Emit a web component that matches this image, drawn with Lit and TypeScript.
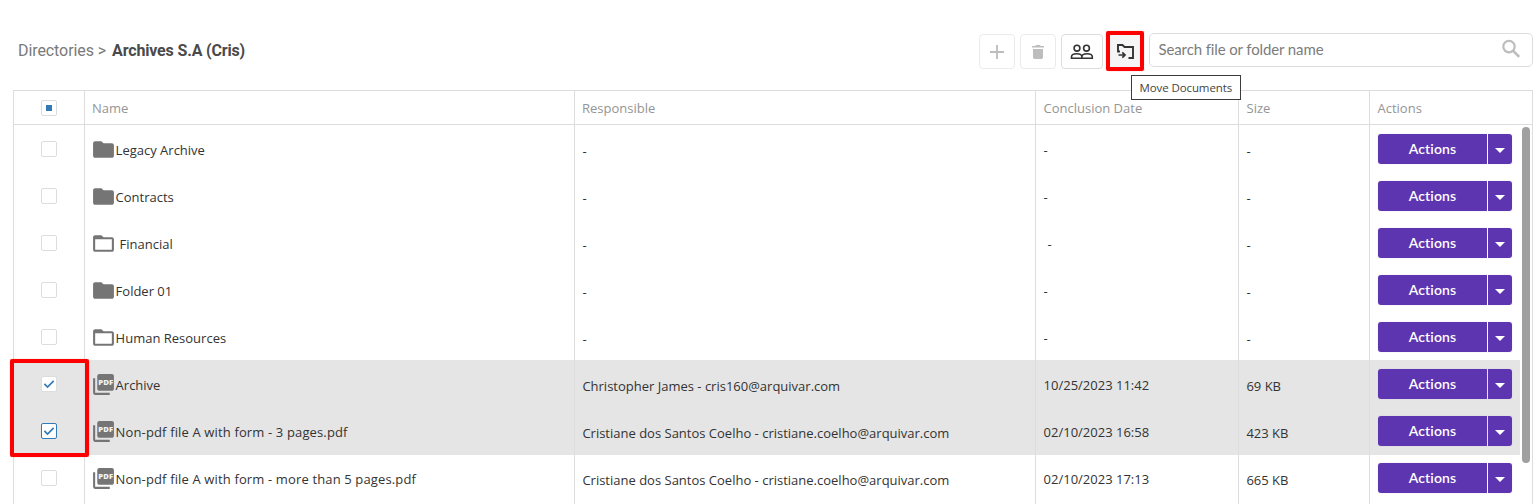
import { LitElement, html, css, svg, nothing } from "lit";
import { customElement, property } from "lit/decorators.js";
import { classMap } from "lit/directives/class-map.js";

type Kind = "folder" | "folder-open" | "pdf";

interface Entry {
  kind: Kind;
  name: string;
  responsible?: string;
  date?: string;
  size?: string;
  checked?: boolean;
  focused?: boolean;
  indent?: boolean;
}

const ENTRIES: Entry[] = [
  { kind: "folder", name: "Legacy Archive" },
  { kind: "folder", name: "Contracts" },
  { kind: "folder-open", name: "Financial", indent: true },
  { kind: "folder", name: "Folder 01" },
  { kind: "folder-open", name: "Human Resources" },
  { kind: "pdf", name: "Archive", responsible: "Christopher James - cris160@arquivar.com", date: "10/25/2023 11:42", size: "69 KB", checked: true },
  { kind: "pdf", name: "Non-pdf file A with form - 3 pages.pdf", responsible: "Cristiane dos Santos Coelho - cristiane.coelho@arquivar.com", date: "02/10/2023 16:58", size: "423 KB", checked: true, focused: true },
  { kind: "pdf", name: "Non-pdf file A with form - more than 5 pages.pdf", responsible: "Cristiane dos Santos Coelho - cristiane.coelho@arquivar.com", date: "02/10/2023 17:13", size: "665 KB" },
];

@customElement("file-icon")
class FileIcon extends LitElement {
  @property() kind: Kind = "folder";

  static styles = css`
    :host { display: block; flex: none; width: 25px; height: 25px; }
    svg { display: block; fill: #757575; }
    .label { font: 800 7.4px "Open Sans", sans-serif; fill: #f2f2f2; }
  `;

  render() {
    const shapes = {
      folder: svg`<path d="M10 4H4c-1.100 0-2 .9-2 2v12c0 1.100.9 2 2 2h16c1.100 0 2-.9 2-2V8c0-1.100-.9-2-2-2h-8l-2-2z"/>`,
      "folder-open": svg`<path d="M20 6h-8l-2-2H4c-1.100 0-2 .9-2 2v12c0 1.100.9 2 2 2h16c1.100 0 2-.9 2-2V8c0-1.100-.9-2-2-2zm0 12H4V8h16v10z"/>`,
      pdf: svg`<path d="M20 2H8c-1.100 0-2 .9-2 2v12c0 1.100.9 2 2 2h12c1.100 0 2-.9 2-2V4c0-1.100-.9-2-2-2z"/><path d="M4 6H2v14c0 1.100.9 2 2 2h14v-2H4V6z"/><text class="label" x="7" y="12.600" textLength="14.400" lengthAdjust="spacingAndGlyphs">PDF</text>`,
    };
    return html`<svg width="25" height="25" viewBox="0 0 24 24">${shapes[this.kind]}</svg>`;
  }
}

@customElement("check-box")
class CheckBox extends LitElement {
  @property() state: "on" | "off" | "mixed" = "off";
  @property({ type: Boolean, reflect: true }) focused = false;

  static styles = css`
    :host { box-sizing: border-box; display: grid; place-items: center; width: 16px; height: 16px; border: 1px solid #ddd; border-radius: 2px; background: #fff; }
    :host([focused]) { border-color: #337ab7; }
    .mixed { width: 6px; height: 6px; background: #337ab7; }
    svg { fill: none; stroke: #337ab7; stroke-width: 1.7; }
  `;

  render() {
    if (this.state === "mixed") return html`<span class="mixed"></span>`;
    if (this.state === "on") return html`<svg width="14" height="14" viewBox="0 0 14 14"><path d="M2.400 6.900 5.500 10 11.700 3.800"/></svg>`;
    return nothing;
  }
}

@customElement("action-button")
class ActionButton extends LitElement {
  static styles = css`
    :host { display: flex; width: 134px; height: 30px; border-radius: 3px; overflow: hidden; color: #fff; font: 600 14px/30px Lato, sans-serif; box-shadow: 0 0 1px #b9a9da; }
    .main { width: 109px; background: #5e35b1; text-align: center; letter-spacing: .15px; }
    .more { display: grid; place-items: center; flex: 1; margin-left: 1px; padding-top: 2px; box-sizing: border-box; background: #5e35b1; }
    svg { display: block; fill: #fff; }
  `;

  render() {
    return html`<span class="main">Actions</span><span class="more"><svg width="10" height="5" viewBox="0 0 10 5"><path d="M0 0h10L5 5z"/></svg></span>`;
  }
}

@customElement("app-root")
class AppRoot extends LitElement {
  static styles = css`
    :host { display: block; position: relative; box-sizing: border-box; height: 504px; overflow: hidden; background: #fff; color: #333; font: 13px/20px "Open Sans", sans-serif; }
    .top { display: flex; align-items: flex-start; box-sizing: border-box; height: 90px; padding: 33px 6px 0 18px; }
    .crumbs { display: flex; flex: 1; gap: 6px; padding-top: 8px; font: 16px/20px Roboto, sans-serif; letter-spacing: -.08px; color: #7a7a7a; }
    .crumbs b { color: #4a4a4a; letter-spacing: -.16px; }
    .tool { display: grid; place-items: center; box-sizing: border-box; width: 36px; height: 35px; margin: 1px 5px 0 0; border: 1px solid #ddd; border-radius: 4px; }
    .tool.off { border-color: #ebebeb; }
    .tool.wide { width: 42px; }
    .tool.hot { position: relative; background: #f5f5f5; }
    .tool svg { display: block; }
    .tool.hot svg { margin: 0 3px 2px 0; }
    .search { display: flex; align-items: flex-start; justify-content: space-between; box-sizing: border-box; width: 384px; height: 34px; padding: 5px 11px 0 8.5px; border: 1px solid #ddd; border-radius: 5px; font: 15px/20px Lato, sans-serif; letter-spacing: -.12px; color: #7c7c7c; }
    .frame { position: absolute; box-sizing: border-box; border: 4px solid #f00; border-radius: 2px; box-shadow: 0 0 1px rgba(255, 0, 0, .6); }
    .frame.button { left: -3px; top: -4px; width: 38px; height: 40px; }
    .frame.checks { left: 10px; top: 359px; width: 79px; height: 98px; }
    .tip { position: absolute; left: 1131px; top: 75px; box-sizing: border-box; width: 110px; height: 25px; padding-left: 7.5px; border: 1px solid #3c3c3c; background: #fff; color: #444; font-size: 11.5px; line-height: 23px; letter-spacing: -.1px; white-space: nowrap; }
    .grid { box-sizing: border-box; width: 1520px; height: 420px; margin-left: 13px; border: 1px solid #ddd; border-bottom: 0; }
    .row { display: grid; grid-template-columns: 71px 490px 461px 203px 131px 150px; }
    .row > div { display: flex; align-items: flex-start; box-sizing: border-box; border-right: 1px solid #ddd; white-space: nowrap; }
    .row > div:last-child { border-right: 0; }
    .head { height: 34px; border-bottom: 1px solid #ddd; box-sizing: border-box; color: #959595; }
    .head > div { padding: 7px 0 0 7px; }
    .head > div:nth-child(n + 4) { padding-left: 7.5px; }
    .head > .check { padding-top: 9px; }
    .row > .check { justify-content: center; padding-left: 0; }
    .body { display: flex; align-items: flex-start; }
    .rows { width: 1506px; }
    .item { height: 47px; }
    .item:last-child { height: 50px; }
    .item > div { padding: 16px 0 0 7.4px; }
    .item > .check { padding-top: 16px; }
    .item > .name { padding: 11.5px 0 0 6px; letter-spacing: .14px; }
    .item > .name span { margin: 3.5px 0 0 -.4px; }
    .item > .name .indent { margin-left: 3.5px; }
    .item > .name.short { letter-spacing: 0; }
    .item > .date { padding: 15px 0 0 7.6px; }
    .item .shift { margin-left: 4px; }
    .item > .act { padding: 9px 0 0 8px; }
    .picked { background: #e5e5e5; }
    .picked + .item:not(.picked) { box-shadow: inset 0 1px #e5e5e5; }
    .bar { width: 8px; height: 336px; margin: 2px 0 0 2px; border-radius: 4px; background: #a0a0a0; }
  `;

  private entry(e: Entry) {
    return html`
      <div class=${classMap({ row: true, item: true, picked: !!e.checked })}>
        <div class="check"><check-box state=${e.checked ? "on" : "off"} ?focused=${!!e.focused}></check-box></div>
        <div class=${classMap({ name: true, short: e.name.length < 20 })}><file-icon kind=${e.kind}></file-icon><span class=${classMap({ indent: !!e.indent })}>${e.name}</span></div>
        <div>${e.responsible ?? "-"}</div>
        <div class="date"><span class=${classMap({ shift: !!e.indent })}>${e.date ?? "-"}</span></div>
        <div>${e.size ?? "-"}</div>
        <div class="act"><action-button></action-button></div>
      </div>`;
  }

  render() {
    return html`
      <header class="top">
        <nav class="crumbs"><span>Directories &gt;</span><b>Archives S.A (Cris)</b></nav>
        <div class="tool off"><svg width="16" height="16" viewBox="0 0 16 16" stroke="#bdbdbd" stroke-width="1.800"><path d="M8 1v14M1 8h14"/></svg></div>
        <div class="tool off"><svg width="12" height="14" viewBox="0 0 12 14" fill="#bdbdbd"><path d="M0 1h3.200l1-1h3.600l1 1H12v1.600H0zM1 4h10v8.200c0 1-.8 1.800-1.800 1.800H2.800C1.800 14 1 13.200 1 12.200z"/></svg></div>
        <div class="tool wide"><svg width="24" height="16" viewBox="0 0 24 16" fill="none" stroke="#333" stroke-width="1.600"><circle cx="7" cy="4.200" r="2.900"/><circle cx="16.500" cy="4.200" r="2.900"/><path d="M1.500 14.200v-1.400c0-2 2.600-3.100 5.200-3.100s5.200 1.100 5.200 3.100v1.400zM11.900 14.200v-1.400c0-2 2.600-3.100 5.200-3.100s5.200 1.100 5.200 3.100v1.400z"/></svg></div>
        <div class="tool hot"><svg width="18" height="16" viewBox="0 0 18 16" fill="none" stroke="#333" stroke-width="1.900"><path d="M4 8.500H2V2h4.500l2 2H17v11h-4.500"/><path d="M2.500 12h6M6.300 9.300 9 12 6.300 14.700" stroke-width="1.700"/></svg><i class="frame button"></i></div>
        <div class="search"><span>Search file or folder name</span><svg width="20" height="20" viewBox="0 0 20 20" fill="none" stroke="#bdbdbd" stroke-width="2.200"><circle cx="8" cy="7.600" r="5.700"/><path d="M12.200 11.800 18.200 17.800" stroke-width="2.600"/></svg></div>
      </header>
      <section class="grid">
        <div class="row head">
          <div class="check"><check-box state="mixed"></check-box></div>
          <div>Name</div><div>Responsible</div><div>Conclusion Date</div><div>Size</div><div>Actions</div>
        </div>
        <div class="body"><div class="rows">${ENTRIES.map((e) => this.entry(e))}</div><div class="bar"></div></div>
      </section>
      <i class="frame checks"></i>
      <div class="tip">Move Documents</div>`;
  }
}
